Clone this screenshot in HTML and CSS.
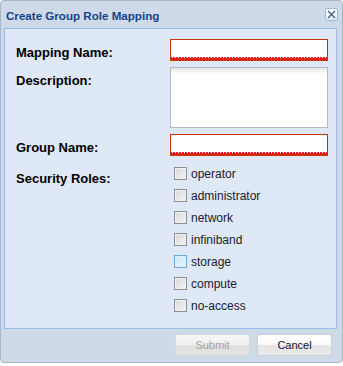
FILE: index.html
```html
<!DOCTYPE html>
<html>
<head>
<meta charset="utf-8">
<link rel="stylesheet" href="styles.css">
</head>
<body>
<div class="window">
  <div class="header">
    <span class="title">Create Group Role Mapping</span>
    <span class="close">
      <svg width="13" height="13" viewBox="0 0 13 13"><path d="M3 3 L10 10 M10 3 L3 10" stroke="#3d5b86" stroke-width="1.3" fill="none"/></svg>
    </span>
  </div>
  <div class="panel">
    <div class="form">
      <label class="lbl">Mapping Name:</label>
      <input class="field invalid" type="text">
      <label class="lbl">Description:</label>
      <textarea class="field area"></textarea>
      <label class="lbl">Group Name:</label>
      <input class="field invalid" type="text">
      <label class="lbl roles">Security Roles:</label>
      <div class="checks">
        <div class="check"><span class="cb"></span>operator</div>
        <div class="check"><span class="cb"></span>administrator</div>
        <div class="check"><span class="cb"></span>network</div>
        <div class="check"><span class="cb"></span>infiniband</div>
        <div class="check"><span class="cb hover"></span>storage</div>
        <div class="check"><span class="cb"></span>compute</div>
        <div class="check"><span class="cb"></span>no-access</div>
      </div>
    </div>
  </div>
  <div class="footer">
    <button class="btn disabled">Submit</button>
    <button class="btn">Cancel</button>
  </div>
</div>
</body>
</html>
```
FILE: styles.css
```css
html, body {
  margin: 0;
  padding: 0;
  background: #ffffff;
}
body {
  font-family: "Liberation Sans", Arial, sans-serif;
}
.window {
  box-sizing: border-box;
  width: 343px;
  height: 363px;
  background: #cedae7;
  border: 1px solid #a7b5c5;
  border-radius: 4px;
  display: flex;
  flex-direction: column;
}
.header {
  height: 27px;
  display: flex;
  align-items: center;
  justify-content: space-between;
  padding: 0 4px 0 5px;
}
.title {
  font-size: 11.6px;
  font-weight: bold;
  color: #15428b;
  margin-top: 1px;
}
.close {
  box-sizing: border-box;
  width: 13px;
  height: 13px;
  border: 1px solid #9fb9dc;
  border-radius: 2px;
  background: linear-gradient(#ffffff, #e4ecf7);
  display: flex;
  align-items: center;
  justify-content: center;
}
.close svg {
  display: block;
  flex: none;
}
.panel {
  box-sizing: border-box;
  height: 301px;
  margin: 0 5px 0 3px;
  background: #dfe8f6;
  border: 1px solid #99bbe8;
  padding: 10px 0 0 11px;
}
.form {
  display: grid;
  grid-template-columns: 154px 158px;
  align-items: start;
}
.lbl {
  font-size: 13px;
  font-weight: bold;
  line-height: 16px;
  color: #000;
  padding-top: 6px;
}
.field {
  box-sizing: border-box;
  width: 158px;
  margin: 0;
  font-family: "Liberation Sans", Arial, sans-serif;
  font-size: 12px;
  outline: none;
  display: block;
}
.invalid {
  height: 22px;
  border: 1px solid #cc3300;
  background-color: #ffffff;
  background-image:
    linear-gradient(45deg, transparent 30%, #e02020 30%, #e02020 65%, transparent 65%),
    linear-gradient(-45deg, transparent 30%, #e02020 30%, #e02020 65%, transparent 65%);
  background-size: 3px 3px;
  background-repeat: repeat-x;
  background-position: left bottom;
}
.form > .field:nth-of-type(1) {
  margin-bottom: 6px;
}
.area {
  height: 61px;
  border: 1px solid #b5b8c8;
  background: linear-gradient(#e4e4e4 0px, #ffffff 6px, #ffffff 100%);
  resize: none;
  margin-bottom: 8px;
}
.lbl.roles {
  padding-top: 8px;
  margin-top: 7px;
}
.checks {
  margin-top: 7px;
  padding-left: 4px;
  display: flex;
  flex-direction: column;
}
.check {
  height: 22px;
  line-height: 22px;
  font-size: 12px;
  color: #1a1a2e;
  display: flex;
  align-items: flex-start;
}
.cb {
  box-sizing: border-box;
  width: 13px;
  height: 13px;
  margin: 4px 4px 0 0;
  border: 1px solid #8f8f8f;
  background: linear-gradient(135deg, #d8d8d8, #f4f4f4);
  box-shadow: inset 0 0 0 1px #f0f0f0;
  flex: none;
}
.cb.hover {
  border-color: #6fa7d8;
  background: linear-gradient(135deg, #c8e6f8, #e8f5fd);
  box-shadow: inset 0 0 0 1px #def0fb;
}
.footer {
  display: flex;
  justify-content: flex-end;
  gap: 7px;
  padding: 5px 10px 0 0;
}
.btn {
  box-sizing: border-box;
  width: 75px;
  height: 22px;
  margin: 0;
  padding: 0;
  font-family: "Liberation Sans", Arial, sans-serif;
  font-size: 11px;
  color: #111;
  border: 1px solid #c9cfd6;
  border-radius: 3px;
  background: linear-gradient(#ffffff 0%, #f9f9f9 50%, #e6e6e6 51%, #e9e9e9 100%);
}
.btn.disabled {
  color: #a3a3a3;
  border-color: #d5dbe2;
  background: linear-gradient(#f6f6f6 0%, #f0f0f0 50%, #e0e0e0 51%, #e3e3e3 100%);
}
```
